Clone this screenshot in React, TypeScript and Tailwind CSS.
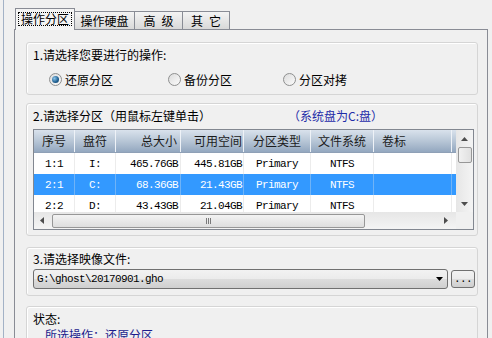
import React from "react";

const cjk = "font-['Noto_Sans_CJK_SC',sans-serif]";
const mono = "font-['Liberation_Mono','Noto_Sans_CJK_SC',monospace] text-[11px] tracking-[-0.6px]";

// column widths and alignment for header and rows
const columns = [
	{ label: "序号", key: "no", w: "w-[41px]", head: "justify-center", cell: "justify-center" },
	{ label: "盘符", key: "drive", w: "w-[41px]", head: "justify-center", cell: "justify-center" },
	{ label: "总大小", key: "total", w: "w-[65px]", head: "justify-end pr-[3px]", cell: "justify-end pr-[2px]" },
	{ label: "可用空间", key: "free", w: "w-[63px]", head: "justify-end pr-[1px]", cell: "justify-end pr-[1px]" },
	{ label: "分区类型", key: "type", w: "w-[67px]", head: "justify-center", cell: "justify-center" },
	{ label: "文件系统", key: "fs", w: "w-[63px]", head: "justify-center", cell: "justify-center" },
	{ label: "卷标", key: "vol", w: "w-[78px]", head: "justify-start pl-[8px]", cell: "justify-start" },
] as const;

type Row = {
	no: string;
	drive: string;
	total: string;
	free: string;
	type: string;
	fs: string;
	vol: string;
	sel?: boolean;
};

const rows: Row[] = [
	{ no: "1:1", drive: "I:", total: "465.76GB", free: "445.81GB", type: "Primary", fs: "NTFS", vol: "" },
	{ no: "2:1", drive: "C:", total: "68.36GB", free: "21.43GB", type: "Primary", fs: "NTFS", vol: "", sel: true },
	{ no: "2:2", drive: "D:", total: "43.43GB", free: "21.04GB", type: "Primary", fs: "NTFS", vol: "" },
];

const Radio = ({ checked }: { checked?: boolean }) => (
	<div className="w-[13px] h-[13px] rounded-full border border-[#8e8f8f] bg-[linear-gradient(135deg,#dcdcdc,#fbfbfb)] flex items-center justify-center shrink-0">
		{checked && (
			<div className="w-[7px] h-[7px] rounded-full bg-[radial-gradient(circle_at_35%_35%,#8cc6ec,#1d5d8e_60%,#143f63)]"></div>
		)}
	</div>
);

const GroupBox = ({ className, children }: { className: string; children?: React.ReactNode }) => (
	<div className={`border border-[#d5d5d5] rounded-[3px] shadow-[inset_1px_1px_0_#ffffff] pl-[6px] ${className}`}>
		{children}
	</div>
);

const Tri = ({ dir, className }: { dir: "up" | "down" | "left" | "right"; className?: string }) => {
	const pts = {
		up: "0,4 3.5,0 7,4",
		down: "0,0 7,0 3.5,4",
		left: "4,0 4,7 0,3.5",
		right: "0,0 0,7 4,3.5",
	}[dir];
	const vertical = dir === "up" || dir === "down";
	return (
		<svg width={vertical ? 7 : 4} height={vertical ? 4 : 7} className={className}>
			<polygon points={pts} fill="currentColor" />
		</svg>
	);
};

const App = () => {
	return (
		<div className={`w-[492px] h-[338px] overflow-hidden bg-[#f0f0f0] pl-[3px] text-black text-[12px] ${cjk}`}>
			<div className="h-full border-l border-[#a3b2c6] pl-[10px] pt-[8px] flex flex-col">
				{/* Tabs */}
				<div className="relative z-10 h-[22px] -mb-px flex items-end pl-[1px] leading-[12px]">
					<div className="w-[60px] h-[22px] border border-b-0 border-[#898c95] bg-[#f4f4f4] flex justify-center pt-[3px]">
						<span className="h-[14px] px-[2px] border border-dotted border-black">操作分区</span>
					</div>
					<div className="w-[60px] h-[18px] mb-px border border-l-0 border-b-0 border-[#898c95] bg-[linear-gradient(#f3f3f3,#e6e6e6_50%,#d9d9d9)] flex justify-center pt-[3px]">
						操作硬盘
					</div>
					<div className="w-[48px] h-[18px] mb-px border border-l-0 border-b-0 border-[#898c95] bg-[linear-gradient(#f3f3f3,#e6e6e6_50%,#d9d9d9)] flex justify-center gap-[6px] pt-[3px]">
						<span>高</span>
						<span>级</span>
					</div>
					<div className="w-[47px] h-[18px] mb-px border border-l-0 border-b-0 border-[#898c95] bg-[linear-gradient(#f3f3f3,#e6e6e6_50%,#d9d9d9)] flex justify-center gap-[6px] pt-[3px]">
						<span>其</span>
						<span>它</span>
					</div>
				</div>

				{/* Tab panel */}
				<div className="flex-1 w-[474px] border border-[#898c95] pt-[12px] pl-[11px] pr-[9px] flex flex-col leading-[12px]">
					{/* 1. operation */}
					<GroupBox className="h-[53px] pt-[6px] shrink-0">
						<div className="h-[12px]">1.请选择您要进行的操作:</div>
						<div className="mt-[12px] ml-[16px] flex items-center">
							<div className="w-[119px] flex items-center gap-[3px]">
								<Radio checked />
								<span>还原分区</span>
							</div>
							<div className="w-[115px] flex items-center gap-[3px]">
								<Radio />
								<span>备份分区</span>
							</div>
							<div className="flex items-center gap-[3px]">
								<Radio />
								<span>分区对拷</span>
							</div>
						</div>
					</GroupBox>

					{/* 2. partition list */}
					<GroupBox className="h-[133px] mt-[8px] pt-[6px] shrink-0">
						<div className="h-[12px] flex">
							<span className="w-[255px]">2.请选择分区（用鼠标左键单击）</span>
							<span className="text-[#1f2ca8]">（系统盘为C:盘）</span>
						</div>
						<div className="mt-[7px] w-[441px] h-[101px] border border-[#828790] bg-white flex flex-col">
							<div className="h-[82px] flex">
								<div className="flex-1 overflow-hidden">
									{/* header */}
									<div className="h-[23px] flex bg-[linear-gradient(#d9e2ec,#b4c3d4_55%,#93a7bf)] text-[#1b1b1b] border-b border-[#8fa0b6]">
										{columns.map((c) => (
											<div key={c.key} className={`${c.w} shrink-0 h-full flex items-center border-r border-[#eef2f7] ${c.head}`}>
												{c.label}
											</div>
										))}
										<div className="w-[3px] shrink-0"></div>
									</div>
									{/* rows */}
									{rows.map((r) => (
										<div
											key={r.no}
											className={`h-[21px] flex ${mono} ${r.sel ? "bg-[#3399ff] text-white" : "bg-white text-black"}`}
										>
											{columns.map((c) => (
												<div
													key={c.key}
													className={`${c.w} shrink-0 h-full flex items-center border-r ${r.sel ? "border-[#6fb3f7]" : "border-[#ececec]"} ${c.cell}`}
												>
													{r[c.key]}
												</div>
											))}
										</div>
									))}
								</div>
								{/* vertical scrollbar */}
								<div className="w-[17px] h-full bg-[linear-gradient(90deg,#e6e6e6,#f4f4f4)] flex flex-col items-center text-[#4d4d4d]">
									<Tri dir="up" className="mt-[7px]" />
									<div className="mt-[6px] w-[14px] h-[16px] rounded-[2px] border border-[#979797] bg-[linear-gradient(90deg,#f1f1f1,#e0e0e0)]"></div>
									<div className="flex-1"></div>
									<Tri dir="down" className="mb-[6px]" />
								</div>
							</div>
							{/* horizontal scrollbar */}
							<div className="h-[17px] flex bg-[linear-gradient(#e6e6e6,#f4f4f4)] text-[#4d4d4d]">
								<div className="flex-1 flex items-center">
									<Tri dir="left" className="ml-[6px]" />
									<div className="ml-[8px] w-[313px] h-[14px] rounded-[2px] border border-[#979797] bg-[linear-gradient(#f3f3f3,#dedede)] flex items-center justify-center">
										<div className="flex gap-[1px]">
											<div className="w-[1px] h-[6px] bg-[#7a7a7a]"></div>
											<div className="w-[1px] h-[6px] bg-[#7a7a7a]"></div>
											<div className="w-[1px] h-[6px] bg-[#7a7a7a]"></div>
										</div>
									</div>
									<div className="flex-1"></div>
									<Tri dir="right" className="mr-[8px]" />
								</div>
								<div className="w-[17px] bg-[#f0f0f0]"></div>
							</div>
						</div>
					</GroupBox>

					{/* 3. image file */}
					<GroupBox className="h-[49px] mt-[11px] pt-[5px] shrink-0">
						<div className="h-[12px]">3.请选择映像文件:</div>
						<div className="mt-[4px] flex">
							<div className="w-[415px] h-[20px] rounded-[3px] border border-[#707070] bg-[linear-gradient(#f2f2f2,#ebebeb_50%,#dddddd_50%,#cfcfcf)] flex items-center pl-[3px] pr-[3px]">
								<span className={mono}>G:\ghost\20170901.gho</span>
								<div className="flex-1"></div>
								<Tri dir="down" className="text-black mr-[1px]" />
							</div>
							<div className="ml-[3px] mt-px w-[24px] h-[18px] rounded-[3px] border border-[#707070] bg-[linear-gradient(#f2f2f2,#ebebeb_50%,#dddddd_50%,#cfcfcf)] flex items-center justify-center">
								<span className={`${mono} leading-[10px]`}>...</span>
							</div>
						</div>
					</GroupBox>

					{/* status */}
					<GroupBox className="h-[60px] mt-[10px] pt-[6px] shrink-0">
						<div className="h-[12px]">状态:</div>
						<div className="mt-[4px] pl-[12px] text-[#1c1c8c]">所选操作：还原分区</div>
					</GroupBox>
				</div>
			</div>
		</div>
	);
};

export default App;
